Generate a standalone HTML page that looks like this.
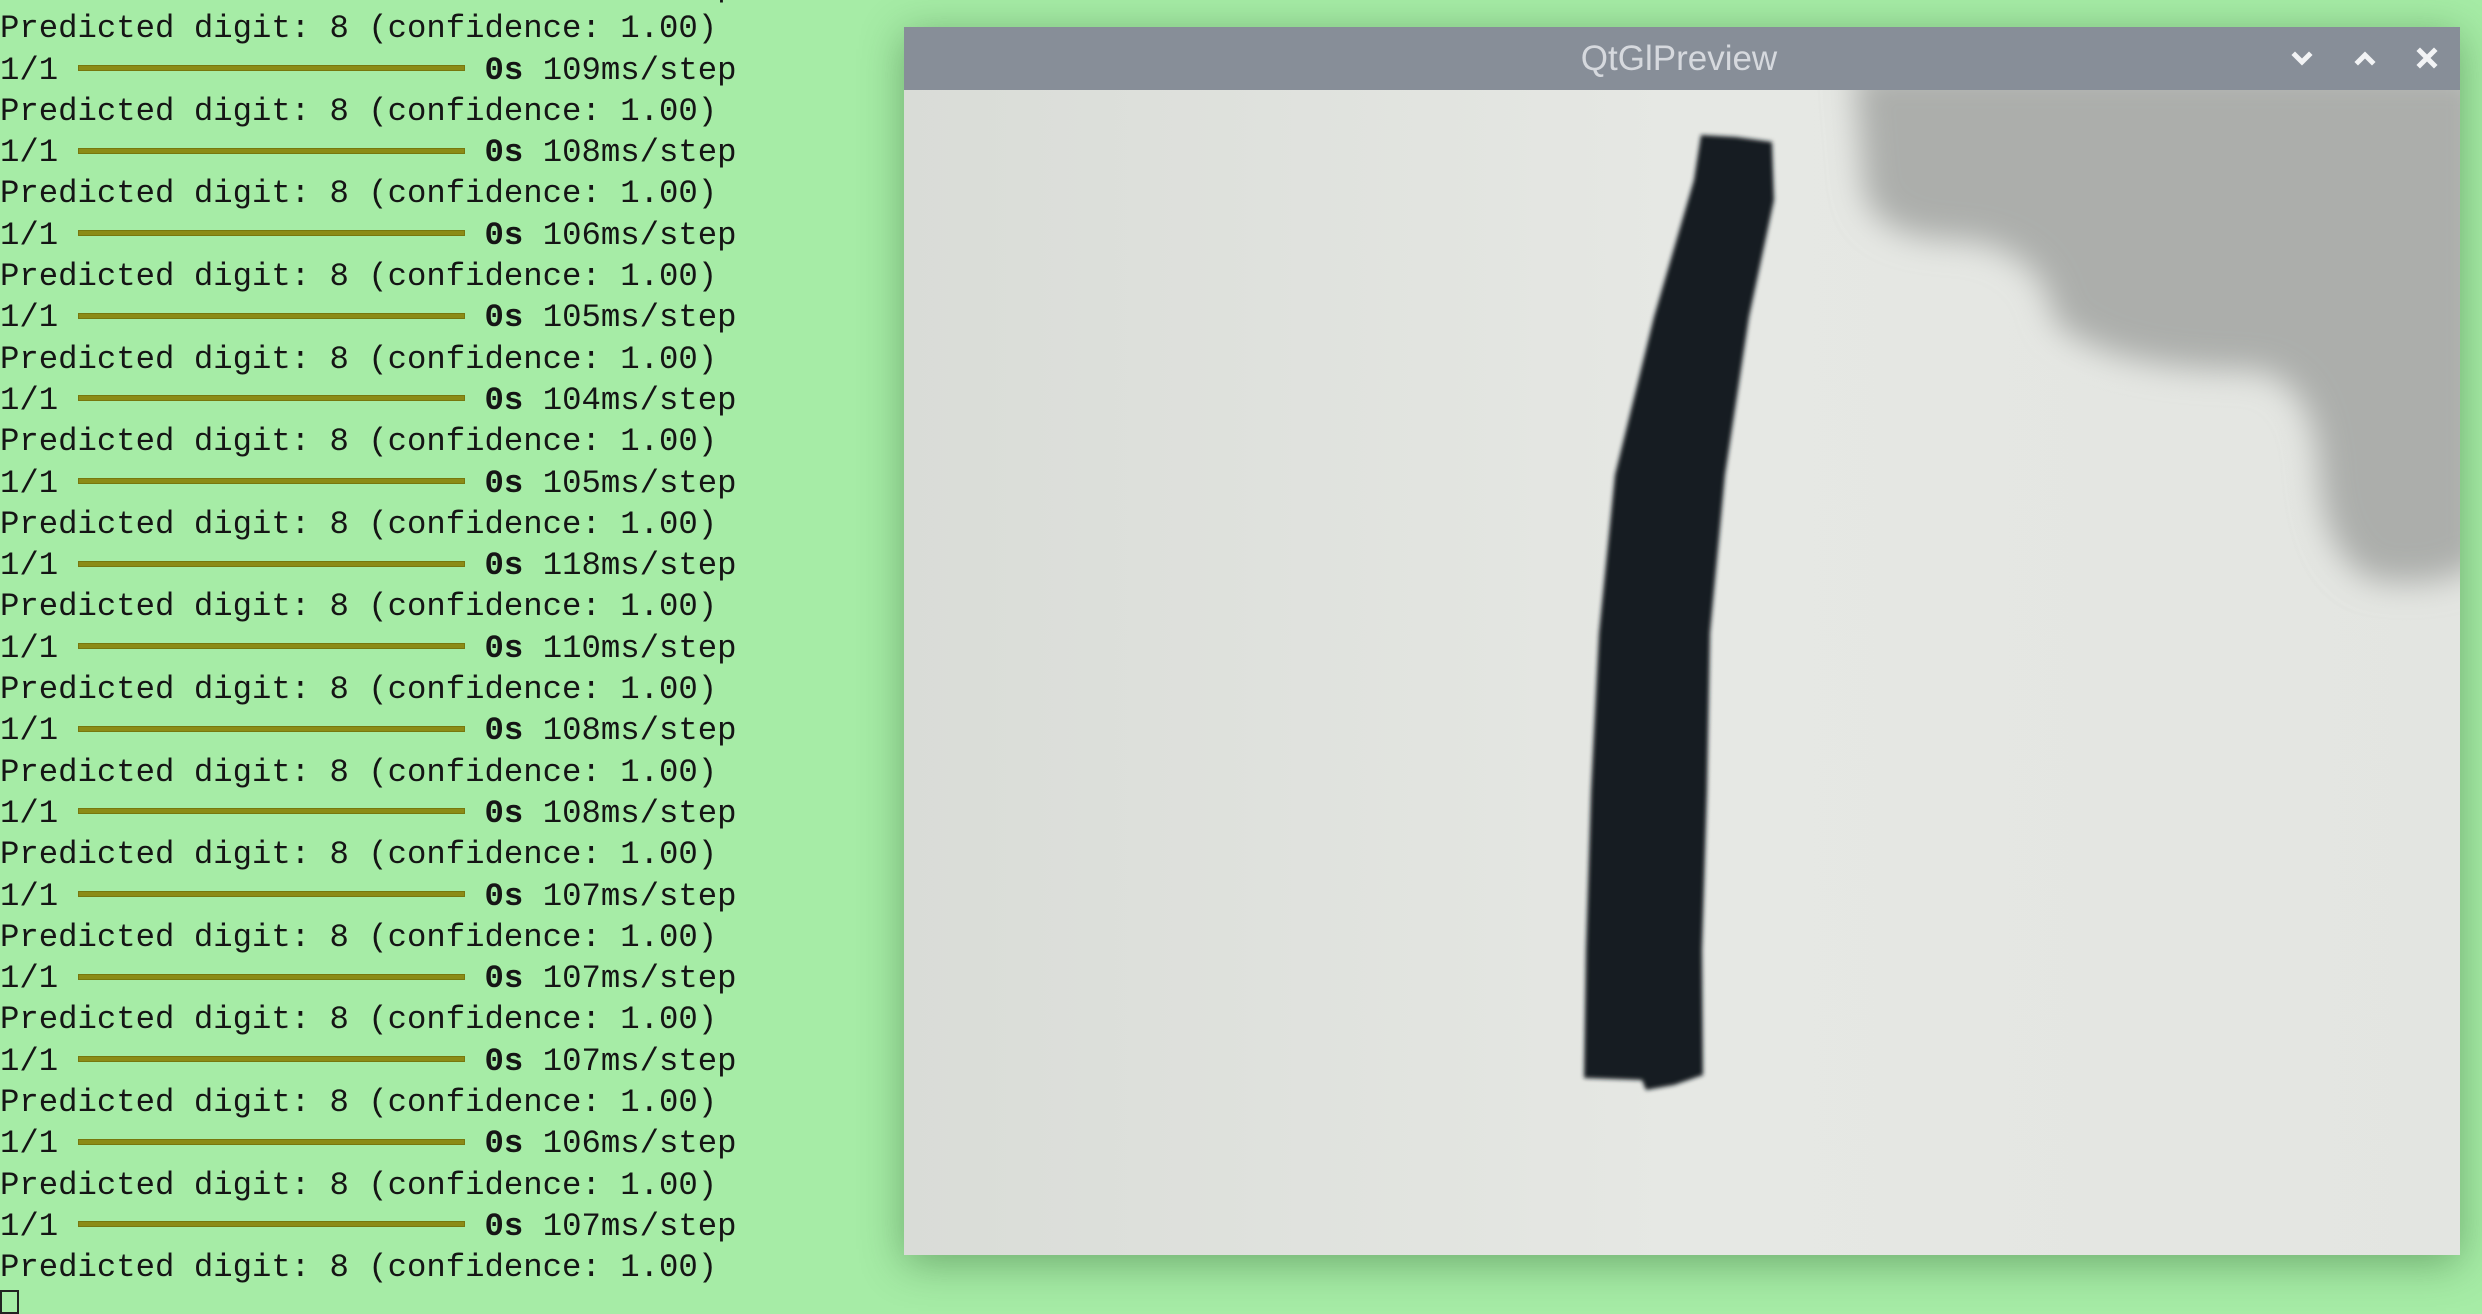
<!DOCTYPE html>
<html><head><meta charset="utf-8">
<style>
html,body{margin:0;padding:0}
body{width:2482px;height:1308px;overflow:hidden;background:#a6eca6;position:relative;font-family:"Liberation Mono",monospace}
#term{position:absolute;left:0;top:-33px;font-size:32.3px;line-height:41.3px;color:#151515;white-space:pre}
.bar{display:inline-block;width:20ch;height:6px;background:#8b8b16;box-shadow:inset 0 0 0 1px #77770e;vertical-align:middle;position:relative;top:-2px}
b{font-weight:bold}
#win{position:absolute;left:904px;top:27px;width:1556px;height:1228px;background:#e3e5e1;box-shadow:0 8px 40px rgba(40,90,40,.45)}
#tb{position:absolute;left:0;top:0;width:100%;height:63px;background:#878e98;color:#d6d9de;font-family:"Liberation Sans",sans-serif;font-size:35px;line-height:63px;text-align:center;text-indent:-6px}
#cur{position:absolute;left:0;top:1290px;width:19px;height:24px;border:2px solid #222;box-sizing:border-box}
</style></head><body>
<div id="term">1/1 <span class="bar"></span> <b>0s</b> 109ms/step
Predicted digit: 8 (confidence: 1.00)
1/1 <span class="bar"></span> <b>0s</b> 109ms/step
Predicted digit: 8 (confidence: 1.00)
1/1 <span class="bar"></span> <b>0s</b> 108ms/step
Predicted digit: 8 (confidence: 1.00)
1/1 <span class="bar"></span> <b>0s</b> 106ms/step
Predicted digit: 8 (confidence: 1.00)
1/1 <span class="bar"></span> <b>0s</b> 105ms/step
Predicted digit: 8 (confidence: 1.00)
1/1 <span class="bar"></span> <b>0s</b> 104ms/step
Predicted digit: 8 (confidence: 1.00)
1/1 <span class="bar"></span> <b>0s</b> 105ms/step
Predicted digit: 8 (confidence: 1.00)
1/1 <span class="bar"></span> <b>0s</b> 118ms/step
Predicted digit: 8 (confidence: 1.00)
1/1 <span class="bar"></span> <b>0s</b> 110ms/step
Predicted digit: 8 (confidence: 1.00)
1/1 <span class="bar"></span> <b>0s</b> 108ms/step
Predicted digit: 8 (confidence: 1.00)
1/1 <span class="bar"></span> <b>0s</b> 108ms/step
Predicted digit: 8 (confidence: 1.00)
1/1 <span class="bar"></span> <b>0s</b> 107ms/step
Predicted digit: 8 (confidence: 1.00)
1/1 <span class="bar"></span> <b>0s</b> 107ms/step
Predicted digit: 8 (confidence: 1.00)
1/1 <span class="bar"></span> <b>0s</b> 107ms/step
Predicted digit: 8 (confidence: 1.00)
1/1 <span class="bar"></span> <b>0s</b> 106ms/step
Predicted digit: 8 (confidence: 1.00)
1/1 <span class="bar"></span> <b>0s</b> 107ms/step
Predicted digit: 8 (confidence: 1.00)</div>
<div id="cur"></div>
<div id="win">
<div id="tb">QtGlPreview
<svg style="position:absolute;left:0;top:0" width="1556" height="63" viewBox="0 0 1556 63">
<g fill="none" stroke="#f2f3f5" stroke-width="5" stroke-linecap="square">
<path d="M1391 28 L1398 35 L1405 28"/>
<path d="M1454 35 L1461 28 L1468 35"/>
<path d="M1516 24 L1530 38 M1530 24 L1516 38"/>
</g></svg>
</div>
<svg style="position:absolute;left:0;top:63px" width="1556" height="1165" viewBox="0 0 1556 1165">
<defs>
<linearGradient id="bg" x1="0" y1="0" x2="1" y2="0">
<stop offset="0" stop-color="#d9dcd7"/><stop offset=".5" stop-color="#e6e8e4"/><stop offset="1" stop-color="#e3e5e1"/></linearGradient>
<filter id="bl"><feGaussianBlur stdDeviation="16"/></filter>
<filter id="b2"><feGaussianBlur stdDeviation="2"/></filter>
</defs>
<rect width="1556" height="1165" fill="url(#bg)"/>
<path filter="url(#bl)" fill="#acaeab" d="M950 -20 L1580 -20 L1580 470 Q1540 500 1470 490 Q1420 470 1415 380 Q1410 290 1350 280 Q1200 280 1150 230 Q1140 160 1060 150 Q970 150 960 100 Z"/>
<path filter="url(#b2)" fill="#151b24" d="M797 45 L832 47 L868 52 L870 110 L845 227 L821 385 L806 543 L803 702 L798 860 L799 985 L770 995 L742 1000 L738 990 L680 988 L682 860 L687 702 L695 543 L711 385 L750 227 L790 90 Z"/>
</svg>
</div>
</body></html>
